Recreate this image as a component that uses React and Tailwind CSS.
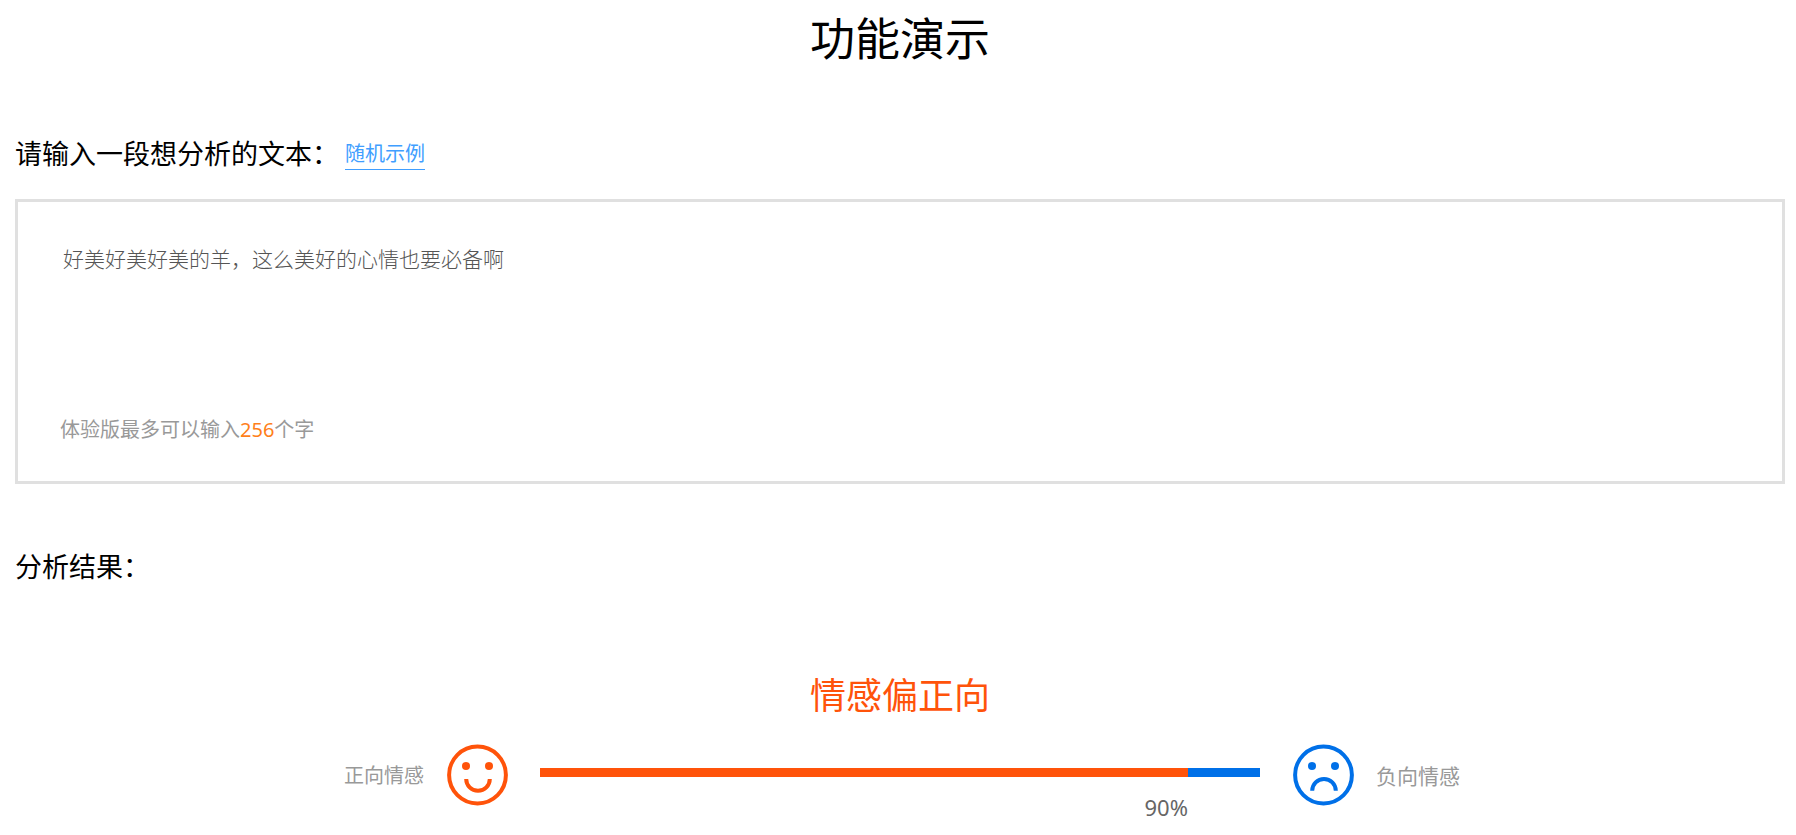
import { useState } from "react";

const MAX_LENGTH = 256;

const EXAMPLES = [
	"好美好美好美的羊，这么美好的心情也要必备啊",
	"物流很快，包装也很用心，下次还会再来",
	"等了半个月才收到，质量太差了",
];

const Face = ({ mouth, className }) => (
	<svg viewBox="0 0 62 62" className={`size-[62px] shrink-0 ${className}`} fill="none" stroke="currentColor" strokeWidth="4" aria-hidden="true">
		<circle cx="31.5" cy="31" r="28.4" />
		<circle cx="20" cy="22" r="4" fill="currentColor" stroke="none" />
		<circle cx="43" cy="22" r="4" fill="currentColor" stroke="none" />
		<path d={mouth} />
	</svg>
);

const App = () => {
	const [exampleIndex, setExampleIndex] = useState(0);
	const [text, setText] = useState(EXAMPLES[0]);
	const positive = 90;

	const showNextExample = (event) => {
		event.preventDefault();
		const next = (exampleIndex + 1) % EXAMPLES.length;
		setExampleIndex(next);
		setText(EXAMPLES[next]);
	};

	return (
		<main lang="zh-CN" className="pl-[15px] pr-[11px] pb-3 bg-white text-black font-['Noto_Sans','Noto_Sans_CJK_SC',sans-serif]">
			<h1 className="text-center text-[45px] leading-[78px]">功能演示</h1>

			<div className="mt-14 flex items-center gap-1.5">
				<label htmlFor="source" className="text-[27px] leading-10">
					请输入一段想分析的文本：
				</label>
				<a href="#example" onClick={showNextExample} className="border-b border-[#409eff] text-[20px] leading-[30px] text-[#409eff]">
					随机示例
				</a>
			</div>

			<div className="mt-[25px] border-3 border-[#e0e0e0] px-[42px] pt-[42px] pb-9">
				<textarea
					id="source"
					value={text}
					maxLength={MAX_LENGTH}
					spellCheck={false}
					onChange={(event) => setText(event.target.value)}
					className="block h-[171px] w-full resize-none px-[3px] text-[21px] leading-[30px] font-light text-[#555] outline-none"
				/>
				<p className="text-[20px] leading-[30px] text-[#999]">
					体验版最多可以输入<span className="text-[#ff7f1a]">{MAX_LENGTH}</span>个字
				</p>
			</div>

			<h2 className="mt-[63px] text-[27px] leading-10">分析结果：</h2>

			<p className="mt-[82px] text-center text-[36px] leading-[54px] text-[#ff530a]">情感偏正向</p>

			<div className="mt-[21px] flex items-start">
				<div className="flex flex-1 justify-end gap-[22px] pr-8">
					<span className="text-[20px] leading-[64px] whitespace-nowrap text-[#999]">正向情感</span>
					<Face mouth="M20.2 35a11.8 11.8 0 0 0 23.6 0" className="text-[#ff530a]" />
				</div>
				<div className="w-[720px] pt-6">
					<div role="meter" aria-label="正向情感" aria-valuemin={0} aria-valuemax={100} aria-valuenow={positive} className="h-[9px] bg-[#0070e8]">
						<div className="h-full bg-[#ff530a]" style={{ width: `${positive}%` }} />
					</div>
					<div className="mt-[15px] text-right text-[22px] leading-[30px] text-[#666]" style={{ width: `${positive}%` }}>
						{positive}%
					</div>
				</div>
				<div className="flex flex-1 gap-[22px] pl-8">
					<Face mouth="M20.2 46.8a11.8 11.8 0 0 1 23.6 0" className="text-[#0070e8]" />
					<span className="text-[21px] leading-[64px] whitespace-nowrap text-[#999]">负向情感</span>
				</div>
			</div>
		</main>
	);
};

export default App;
